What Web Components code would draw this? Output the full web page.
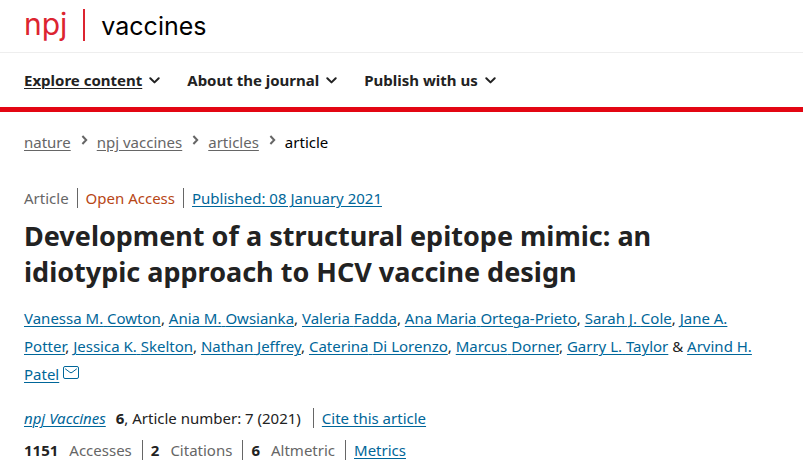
<!DOCTYPE html>
<html lang="en">
<head>
<meta charset="utf-8">
<meta name="viewport" content="width=device-width, initial-scale=1">
<title>Development of a structural epitope mimic | npj Vaccines</title>
<style>
  body {
    margin: 0;
    background: #fff;
    color: #222;
    font: 15px/28px "Noto Sans", "Open Sans", sans-serif;
    --ink: #222;
    --muted: #666;
    --link: #069;
    --brand: #e30613;
    --gutter: 24px;
  }
</style>
</head>
<body>
<journal-header>
  <journal-logo slot="logo"></journal-logo>
  <nav-item current>Explore content</nav-item>
  <nav-item>About the journal</nav-item>
  <nav-item>Publish with us</nav-item>
</journal-header>
<article-page>
  <bread-crumbs>
    <crumb-item href="#nature">nature</crumb-item>
    <crumb-item href="#npjvaccines">npj vaccines</crumb-item>
    <crumb-item href="#articles">articles</crumb-item>
    <crumb-item>article</crumb-item>
  </bread-crumbs>
  <meta-row id="identifiers">
    <meta-item tone="muted">Article</meta-item>
    <meta-item tone="open">Open Access</meta-item>
    <meta-item><text-link href="#published">Published: 08 January 2021</text-link></meta-item>
  </meta-row>
  <article-title>Development of a structural epitope mimic: an idiotypic approach to HCV vaccine design</article-title>
  <author-list></author-list>
  <meta-row spacing="wide">
    <meta-item><journal-citation volume="6" number="7" year="2021">npj Vaccines</journal-citation></meta-item>
    <meta-item><text-link href="#cite">Cite this article</text-link></meta-item>
  </meta-row>
  <meta-row spacing="medium">
    <meta-item><metric-count value="1151">Accesses</metric-count></meta-item>
    <meta-item><metric-count value="2">Citations</metric-count></meta-item>
    <meta-item><metric-count value="6">Altmetric</metric-count></meta-item>
    <meta-item><text-link href="#metrics">Metrics</text-link></meta-item>
  </meta-row>
</article-page>

<script>
  const define = (name, markup, setup) => {
    const template = document.createElement("template");
    template.innerHTML = markup;
    customElements.define(name, class extends HTMLElement {
      constructor() {
        super();
        this.attachShadow({ mode: "open" }).append(template.content.cloneNode(true));
      }
      connectedCallback() {
        if (setup) setup(this, this.shadowRoot);
      }
    });
  };

  const linkStyle = `
    a { color: var(--link); text-decoration: underline; text-decoration-thickness: 1px; text-underline-offset: 2px; }
  `;

  define("journal-header", `
    <style>
      :host { display: block; border-bottom: 5px solid var(--brand); }
      .brand { display: flex; align-items: center; height: 50px; padding: 0 var(--gutter) 2px; border-bottom: 1px solid #eee; box-sizing: content-box; }
      nav { display: flex; flex-wrap: wrap; gap: 27px; padding: 13px var(--gutter); }
    </style>
    <header>
      <div class="brand"><slot name="logo"></slot></div>
      <nav aria-label="Main"><slot></slot></nav>
    </header>
  `);

  define("journal-logo", `
    <style>
      :host { display: block; }
      a { display: flex; align-items: baseline; gap: 16px; color: #000; text-decoration: none; font-family: Inter, "Liberation Sans", sans-serif; line-height: 32px; }
      .npj { color: #dc2430; font-size: 30px; }
      .bar { align-self: center; width: 2px; height: 32px; background: #dc2430; }
      .name { font-size: 25px; }
    </style>
    <a href="#home"><span class="npj">npj</span><span class="bar"></span><span class="name">vaccines</span></a>
  `);

  define("nav-item", `
    <style>
      :host { display: block; }
      button { display: flex; align-items: center; gap: 7px; padding: 0; border: 0; background: none; color: var(--ink); font: inherit; font-weight: 700; line-height: 28px; cursor: pointer; }
      :host([current]) span { text-decoration: underline; text-decoration-thickness: 1px; text-underline-offset: 2px; }
      svg { display: block; width: 11px; height: 7px; }
    </style>
    <button type="button" aria-expanded="false"><span><slot></slot></span><svg viewBox="0 0 11 7" aria-hidden="true"><path d="M1.300 1.200 5.500 5.400 9.700 1.200" fill="none" stroke="#222" stroke-width="2" stroke-linecap="round" stroke-linejoin="round"/></svg></button>
  `);

  define("article-page", `
    <style>
      :host { display: block; padding: 16px 40px 16px var(--gutter); }
    </style>
    <main><slot></slot></main>
  `);

  define("bread-crumbs", `
    <style>
      :host { display: block; margin-bottom: 28px; }
      nav { display: flex; flex-wrap: wrap; }
    </style>
    <nav aria-label="Breadcrumbs"><slot></slot></nav>
  `);

  define("crumb-item", `
    <style>
      :host { display: flex; align-items: center; color: #000; }
      a { color: var(--muted); text-decoration: underline; text-decoration-thickness: 1px; text-underline-offset: 2px; }
      svg { display: block; width: 7px; height: 10px; margin: 0 9px 0 10px; padding-bottom: 4px; }
    </style>
    <slot></slot>
  `, (host, root) => {
    if (!host.hasAttribute("href") || root.querySelector("a")) return;
    const link = document.createElement("a");
    link.href = host.getAttribute("href");
    link.append(root.querySelector("slot"));
    root.append(link);
    link.insertAdjacentHTML("afterend", `<svg viewBox="0 0 7 10" aria-hidden="true"><path d="M1.4 1 5.2 5 1.4 9" fill="none" stroke="#666" stroke-width="2"/></svg>`);
  });

  define("meta-row", `
    <style>
      :host { display: flex; flex-wrap: wrap; align-items: center; row-gap: 4px; margin-bottom: 4px; --before-bar: 8px; }
      :host([spacing="medium"]) { --before-bar: 10px; }
      :host([spacing="wide"]) { --before-bar: 12px; }
    </style>
    <slot></slot>
  `);

  define("meta-item", `
    <style>
      :host { display: flex; align-items: center; }
      :host([tone="muted"]) { color: var(--muted); }
      :host([tone="open"]) { color: #b74616; }
      :host(:not(:last-child))::after { content: ""; width: 1px; height: 20px; margin: 0 8px 0 var(--before-bar); background: #666; }
    </style>
    <slot></slot>
  `);

  define("text-link", `
    <style>:host { display: inline; } ${linkStyle}</style><a><slot></slot></a>
  `, (host, root) => { root.querySelector("a").href = host.getAttribute("href"); });

  define("article-title", `
    <style>
      :host { display: block; margin: 6px 0 14px; }
      h1 { margin: 0; font-size: 27px; font-weight: 700; line-height: 36px; }
    </style>
    <h1><slot></slot></h1>
  `);

  const authors = [["Vanessa M.", "Cowton"], ["Ania M.", "Owsianka"], ["Valeria", "Fadda"],
    ["Ana Maria", "Ortega-Prieto"], ["Sarah J.", "Cole"], ["Jane A.", "Potter"], ["Jessica K.", "Skelton"],
    ["Nathan", "Jeffrey"], ["Caterina", "Di Lorenzo"], ["Marcus", "Dorner"], ["Garry L.", "Taylor"],
    ["Arvind H.", "Patel"]];

  define("author-list", `
    <style>
      :host { display: block; margin-bottom: 16px; }
      p { margin: 0; }
      ${linkStyle}
      svg { width: 16px; height: 13px; margin-left: 4px; vertical-align: 1px; }
    </style>
    <p></p>
  `, (host, root) => {
    const last = authors.length - 1;
    root.querySelector("p").innerHTML = authors.map(([given, family], i) => {
      const icon = i === last
        ? `<svg viewBox="0 0 16 13" aria-label="Email"><g fill="none" stroke="#069"><rect x=".5" y=".5" width="15" height="12" rx="1.5"/><path d="M2.500 3 7 6.400q1 .7 2 0L13.500 3" stroke-linecap="round"/></g></svg>` : "";
      return `<a href="#author-${i + 1}"><span>${given}</span> <span>${family}</span>${icon}</a>`;
    }).reduce((text, link, i) => text + (i === last ? " &amp; " : ", ") + link);
  });

  define("journal-citation", `
    <style>:host { display: block; } ${linkStyle} b { margin-left: 6px; }</style>
    <a href="#journal"><i><slot></slot></i></a> <b></b><span></span>
  `, (host, root) => {
    root.querySelector("b").textContent = host.getAttribute("volume");
    root.querySelector("span").textContent = `, Article number: ${host.getAttribute("number")} (${host.getAttribute("year")})`;
  });

  define("metric-count", `
    <style>
      :host { display: flex; gap: 11px; color: var(--muted); }
      b { color: var(--ink); }
    </style>
    <b></b><span><slot></slot></span>
  `, (host, root) => { root.querySelector("b").textContent = host.getAttribute("value"); });
</script>
</body>
</html>
